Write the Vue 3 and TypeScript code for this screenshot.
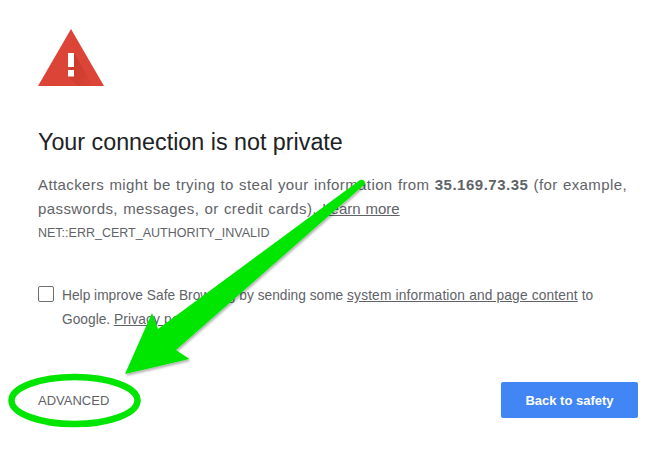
<script setup lang="ts">
const title: string = 'Your connection is not private'
</script>

<template>
  <main class="page">
    <svg class="warn" width="66" height="58" viewBox="0 0 66 58" aria-hidden="true">
      <defs>
        <linearGradient id="fade" x1="0" y1="0" x2="1" y2="1">
          <stop offset="0" stop-color="#a52714" stop-opacity="0.45" />
          <stop offset="1" stop-color="#a52714" stop-opacity="0" />
        </linearGradient>
      </defs>
      <path d="M33 0 L66 57 H0 Z" fill="#db4437" />
      <path d="M36 24 L55 57 H40 L30 47 Z" fill="url(#fade)" />
      <rect x="30" y="24" width="6" height="14" fill="#fff" />
      <rect x="30" y="41" width="6" height="6.5" fill="#fff" />
    </svg>
    <h1 class="title">{{ title }}</h1>
    <p class="desc">
      Attackers might be trying to steal your information from <b>35.169.73.35</b> (for example,
      passwords, messages, or credit cards). <a class="link">Learn more</a>
    </p>
    <div class="code">NET::ERR_CERT_AUTHORITY_INVALID</div>
    <div class="opt">
      <span class="box"></span>
      <p class="opt-text">
        Help improve Safe Browsing by sending some <a class="link">system information and page content</a> to
        Google. <a class="link">Privacy policy</a>
      </p>
    </div>
    <div class="actions">
      <span class="adv">ADVANCED</span>
      <button class="safe">Back to safety</button>
    </div>
    <svg class="overlay" width="671" height="462" viewBox="0 0 671 462" aria-hidden="true">
      <defs>
        <filter id="sh" x="-10%" y="-10%" width="120%" height="120%">
          <feDropShadow dx="1" dy="2" stdDeviation="1.2" flood-color="#000" flood-opacity="0.3" />
        </filter>
      </defs>
      <path filter="url(#sh)" d="M125 374 L152 313 L158 329 L360 180 Q365 179 365 184 L176 350 L189.500 359 Z" fill="#00e600" />
      <ellipse cx="74.500" cy="400.500" rx="63" ry="23.500" fill="none" stroke="#00e600" stroke-width="6.500" />
    </svg>
  </main>
</template>

<style>
html, body { margin: 0; background: #fff; }
</style>

<style scoped>
.page {
  position: relative;
  width: 671px;
  height: 462px;
  box-sizing: border-box;
  padding: 29px 33px 0 38px;
  overflow: hidden;
  font-family: "Liberation Sans", Arial, sans-serif;
  color: #5f6368;
}
.warn { display: block; }
.title {
  margin: 41px 0 0;
  font-size: 23.300px;
  line-height: 28px;
  font-weight: 400;
  color: #202124;
}
.desc {
  margin: 17px 0 0;
  font-size: 15px;
  line-height: 24px;
  letter-spacing: 0.4px;
  word-spacing: 0.7px;
}
.desc b { font-weight: 700; letter-spacing: 0.5px; }
.desc .link { letter-spacing: 0; }
.link { color: #5f6368; text-decoration: underline; }
.code { font-size: 12.500px; line-height: 16px; margin-top: 4px; }
.opt { display: flex; align-items: flex-start; gap: 8px; margin-top: 45px; }
.box {
  width: 14px;
  height: 14px;
  flex: none;
  border: 1px solid #6e7074;
  border-radius: 2px;
}
.opt-text {
  margin: -2px 0 0;
  font-size: 13.750px;
  line-height: 24px;
  width: 535px;
}
.opt-text .link { letter-spacing: 0.15px; }
.actions {
  display: flex;
  justify-content: space-between;
  align-items: center;
  margin-top: 50px;
}
.adv { font-size: 13px; }
.safe {
  width: 137px;
  height: 36px;
  border: none;
  border-radius: 2px;
  background: #4285f4;
  color: #fff;
  font: 700 13px "Liberation Sans", Arial, sans-serif;
}
.overlay { position: absolute; left: 0; top: 0; pointer-events: none; }
</style>
